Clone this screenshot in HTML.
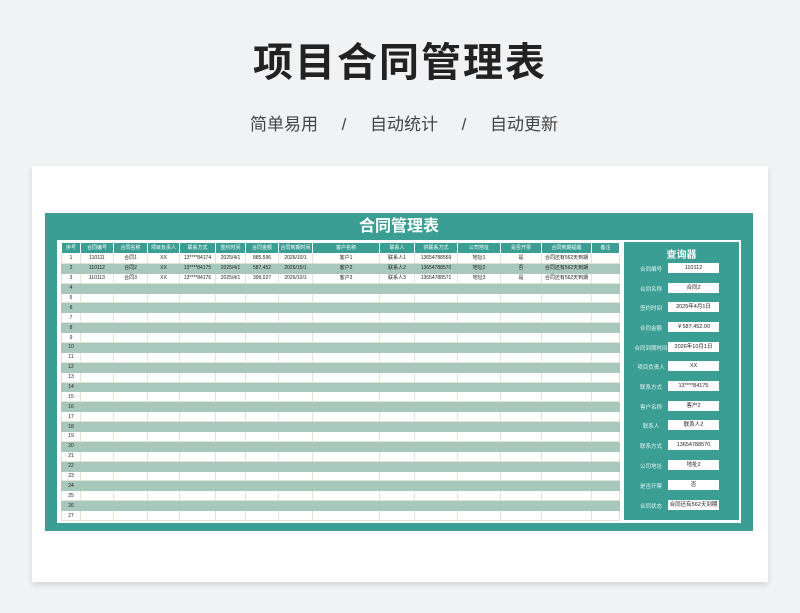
<!DOCTYPE html>
<html><head><meta charset="utf-8"><style>
*{margin:0;padding:0;box-sizing:border-box}
body{width:800px;height:613px;background:#f1f2f4;font-family:"Liberation Sans","Noto Sans CJK SC",sans-serif;position:relative;overflow:hidden}
.h1{position:absolute;top:30px;left:0;width:800px;text-align:center;font-size:40px;font-weight:bold;color:#222;letter-spacing:2px}
.sub{position:absolute;top:110px;left:4px;width:800px;text-align:center;font-size:17px;color:#444;word-spacing:0}
.card{position:absolute;left:32px;top:166px;width:736px;height:416px;background:#fff;box-shadow:0 3px 6px rgba(0,0,0,.12)}
.frame{position:absolute;left:45px;top:213px;width:708px;height:318px;background:#3a9e94}
.ttl{position:absolute;left:45px;top:214px;width:708px;text-align:center;color:#fff;font-weight:bold;font-size:16px;line-height:26px}
.inner{position:absolute;left:57px;top:240px;width:684px;height:283px;background:#fff}
table{position:absolute;left:61px;top:242px;border-collapse:collapse;table-layout:fixed}
td{height:9.9px;font-size:5px;text-align:center;border:1px solid #e2e4d4;color:#222;padding:0;line-height:8px;white-space:nowrap;overflow:hidden}
tr.hd td{background:#3a9e94;color:#fff;border-color:#fff;height:11px}
tr.g td{background:#a8c8bd;border-color:#a8c8bd}
td:first-child{text-align:center}
.q{position:absolute;left:624px;top:242px;width:115px;height:278px;background:#3a9e94}
.qt{position:absolute;left:624px;top:246px;width:115px;text-align:center;color:#fff;font-weight:bold;font-size:10px}
.ql{position:absolute;left:628px;width:46px;text-align:center;color:#e8f4f2;font-size:5.5px}
.qv{position:absolute;left:668px;width:51px;height:10px;background:#fff;font-size:5.5px;text-align:center;line-height:10px;color:#222}
</style></head><body>
<div class="h1">项目合同管理表</div>
<div class="sub">简单易用&nbsp;&nbsp;&nbsp;&nbsp;&nbsp;/&nbsp;&nbsp;&nbsp;&nbsp;&nbsp;自动统计&nbsp;&nbsp;&nbsp;&nbsp;&nbsp;/&nbsp;&nbsp;&nbsp;&nbsp;&nbsp;自动更新</div>
<div class="card"></div>
<div class="frame"></div>
<div class="ttl">合同管理表</div>
<div class="inner"></div>
<table>
<colgroup><col style="width:19px"><col style="width:33px"><col style="width:34px"><col style="width:32px"><col style="width:36px"><col style="width:30px"><col style="width:33px"><col style="width:34px"><col style="width:67px"><col style="width:35px"><col style="width:43px"><col style="width:43px"><col style="width:41px"><col style="width:50px"><col style="width:28px"></colgroup>
<tr class="hd"><td>序号</td><td>合同编号</td><td>合同名称</td><td>项目负责人</td><td>联系方式</td><td>签约时间</td><td>合同金额</td><td>合同到期时间</td><td>客户名称</td><td>联系人</td><td>供联系方式</td><td>公司地址</td><td>是否开票</td><td>合同到期提醒</td><td>备注</td></tr>
<tr><td>1</td><td>110111</td><td>合同1</td><td>XX</td><td>13****84174</td><td>2025/4/1</td><td>885,596</td><td>2026/10/1</td><td>客户1</td><td>联系人1</td><td>13654788569</td><td>地址1</td><td>是</td><td>合同还有562天到期</td><td></td></tr>
<tr class="g"><td>2</td><td>110112</td><td>合同2</td><td>XX</td><td>13****84175</td><td>2025/4/1</td><td>587,452</td><td>2026/10/1</td><td>客户2</td><td>联系人2</td><td>13654788570</td><td>地址2</td><td>否</td><td>合同还有562天到期</td><td></td></tr>
<tr><td>3</td><td>110113</td><td>合同3</td><td>XX</td><td>13****84176</td><td>2025/4/1</td><td>399,027</td><td>2026/10/1</td><td>客户3</td><td>联系人3</td><td>13654788571</td><td>地址3</td><td>是</td><td>合同还有562天到期</td><td></td></tr>
<tr class="g"><td>4</td><td colspan="14"></td></tr>
<tr><td>5</td><td></td><td></td><td></td><td></td><td></td><td></td><td></td><td></td><td></td><td></td><td></td><td></td><td></td><td></td></tr>
<tr class="g"><td>6</td><td colspan="14"></td></tr>
<tr><td>7</td><td></td><td></td><td></td><td></td><td></td><td></td><td></td><td></td><td></td><td></td><td></td><td></td><td></td><td></td></tr>
<tr class="g"><td>8</td><td colspan="14"></td></tr>
<tr><td>9</td><td></td><td></td><td></td><td></td><td></td><td></td><td></td><td></td><td></td><td></td><td></td><td></td><td></td><td></td></tr>
<tr class="g"><td>10</td><td colspan="14"></td></tr>
<tr><td>11</td><td></td><td></td><td></td><td></td><td></td><td></td><td></td><td></td><td></td><td></td><td></td><td></td><td></td><td></td></tr>
<tr class="g"><td>12</td><td colspan="14"></td></tr>
<tr><td>13</td><td></td><td></td><td></td><td></td><td></td><td></td><td></td><td></td><td></td><td></td><td></td><td></td><td></td><td></td></tr>
<tr class="g"><td>14</td><td colspan="14"></td></tr>
<tr><td>15</td><td></td><td></td><td></td><td></td><td></td><td></td><td></td><td></td><td></td><td></td><td></td><td></td><td></td><td></td></tr>
<tr class="g"><td>16</td><td colspan="14"></td></tr>
<tr><td>17</td><td></td><td></td><td></td><td></td><td></td><td></td><td></td><td></td><td></td><td></td><td></td><td></td><td></td><td></td></tr>
<tr class="g"><td>18</td><td colspan="14"></td></tr>
<tr><td>19</td><td></td><td></td><td></td><td></td><td></td><td></td><td></td><td></td><td></td><td></td><td></td><td></td><td></td><td></td></tr>
<tr class="g"><td>20</td><td colspan="14"></td></tr>
<tr><td>21</td><td></td><td></td><td></td><td></td><td></td><td></td><td></td><td></td><td></td><td></td><td></td><td></td><td></td><td></td></tr>
<tr class="g"><td>22</td><td colspan="14"></td></tr>
<tr><td>23</td><td></td><td></td><td></td><td></td><td></td><td></td><td></td><td></td><td></td><td></td><td></td><td></td><td></td><td></td></tr>
<tr class="g"><td>24</td><td colspan="14"></td></tr>
<tr><td>25</td><td></td><td></td><td></td><td></td><td></td><td></td><td></td><td></td><td></td><td></td><td></td><td></td><td></td><td></td></tr>
<tr class="g"><td>26</td><td colspan="14"></td></tr>
<tr><td>27</td><td></td><td></td><td></td><td></td><td></td><td></td><td></td><td></td><td></td><td></td><td></td><td></td><td></td><td></td></tr>
</table>
<div class="q"></div>
<div class="qt">查询器</div>
<div class="ql" style="top:265px">合同编号</div><div class="qv" style="top:263px">110112</div>
<div class="ql" style="top:285px">合同名称</div><div class="qv" style="top:283px">合同2</div>
<div class="ql" style="top:304px">签约时间</div><div class="qv" style="top:302px">2025年4月1日</div>
<div class="ql" style="top:324px">合同金额</div><div class="qv" style="top:322px">￥587,452.00</div>
<div class="ql" style="top:344px">合同到期时间</div><div class="qv" style="top:342px">2026年10月1日</div>
<div class="ql" style="top:363px">项目负责人</div><div class="qv" style="top:361px">XX</div>
<div class="ql" style="top:383px">联系方式</div><div class="qv" style="top:381px">13****84175</div>
<div class="ql" style="top:403px">客户名称</div><div class="qv" style="top:401px">客户2</div>
<div class="ql" style="top:422px">联系人</div><div class="qv" style="top:420px">联系人2</div>
<div class="ql" style="top:442px">联系方式</div><div class="qv" style="top:440px">13654788570</div>
<div class="ql" style="top:462px">公司地址</div><div class="qv" style="top:460px">地址2</div>
<div class="ql" style="top:482px">是否开票</div><div class="qv" style="top:480px">否</div>
<div class="ql" style="top:502px">合同状态</div><div class="qv" style="top:500px">合同还有562天到期</div>
</body></html>
